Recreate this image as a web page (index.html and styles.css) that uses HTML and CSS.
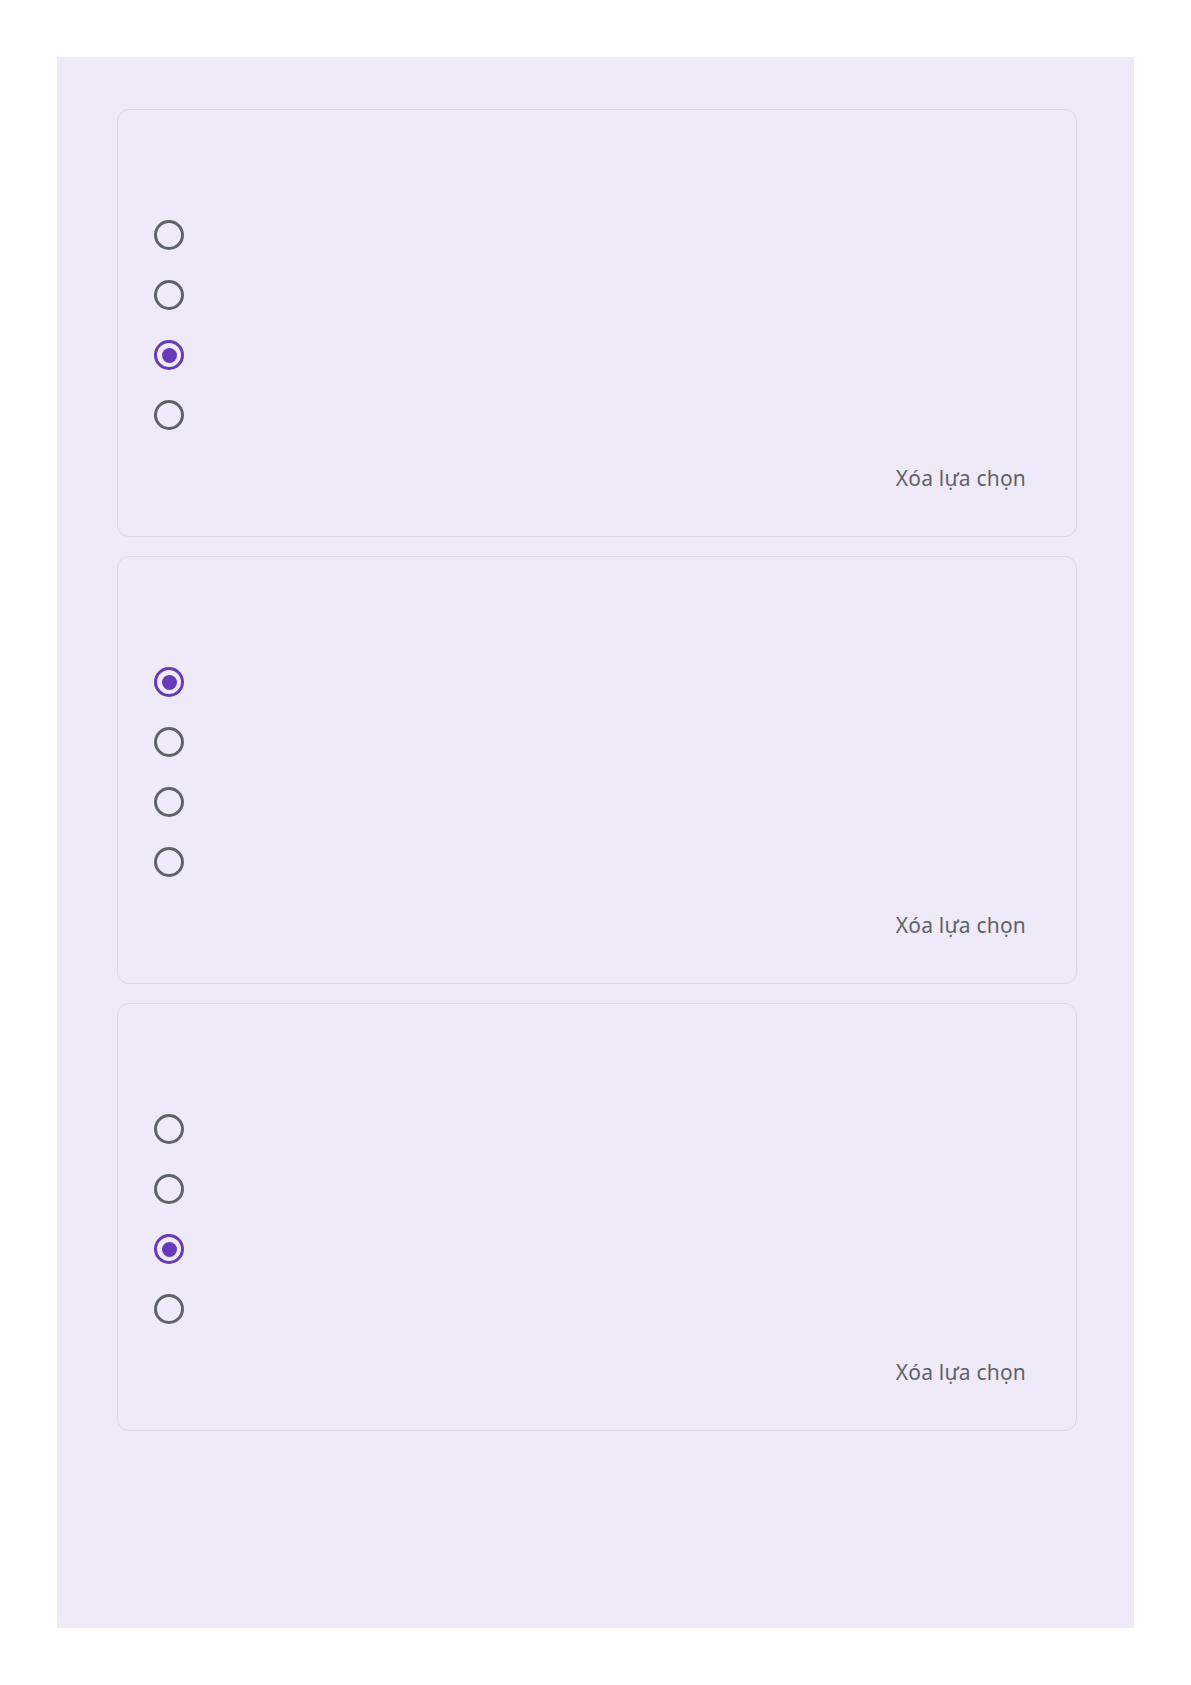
FILE: index.html
```html
<!DOCTYPE html>
<html lang="vi">
<head>
<meta charset="utf-8">
<title>Form</title>
<link rel="stylesheet" href="styles.css">
</head>
<body>
<div class="panel">
  <div class="card">
    <div class="title"></div>
    <div class="options">
      <div class="option"><span class="radio"></span></div>
      <div class="option"><span class="radio"></span></div>
      <div class="option"><span class="radio checked"></span></div>
      <div class="option"><span class="radio"></span></div>
    </div>
    <div class="footer"><span class="clear">Xóa lựa chọn</span></div>
  </div>
  <div class="card">
    <div class="title"></div>
    <div class="options">
      <div class="option"><span class="radio checked"></span></div>
      <div class="option"><span class="radio"></span></div>
      <div class="option"><span class="radio"></span></div>
      <div class="option"><span class="radio"></span></div>
    </div>
    <div class="footer"><span class="clear">Xóa lựa chọn</span></div>
  </div>
  <div class="card">
    <div class="title"></div>
    <div class="options">
      <div class="option"><span class="radio"></span></div>
      <div class="option"><span class="radio"></span></div>
      <div class="option"><span class="radio checked"></span></div>
      <div class="option"><span class="radio"></span></div>
    </div>
    <div class="footer"><span class="clear">Xóa lựa chọn</span></div>
  </div>
</div>
</body>
</html>
```
FILE: styles.css
```css
html, body {
  margin: 0;
  padding: 0;
  background: #ffffff;
}
body {
  font-family: "Noto Sans", "Open Sans", sans-serif;
}
.panel {
  margin: 57px 57px 0 57px;
  width: 1077px;
  height: 1571px;
  box-sizing: border-box;
  background: #eeeaf8;
  padding: 52px 57px 0 60px;
  display: flex;
  flex-direction: column;
  gap: 19px;
}
.card {
  width: 960px;
  height: 428px;
  box-sizing: border-box;
  border: 1px solid #dcdae0;
  border-radius: 12px;
  padding: 36px 36px 0 36px;
  display: flex;
  flex-direction: column;
}
.title {
  height: 59px;
}
.options {
  display: flex;
  flex-direction: column;
}
.option {
  height: 60px;
  display: flex;
  align-items: center;
}
.radio {
  width: 30px;
  height: 30px;
  box-sizing: border-box;
  border: 3px solid #5f6368;
  border-radius: 50%;
  display: flex;
  align-items: center;
  justify-content: center;
}
.radio.checked {
  border-color: #673ab7;
}
.radio.checked::after {
  content: "";
  width: 15px;
  height: 15px;
  border-radius: 50%;
  background: #673ab7;
}
.footer {
  padding-top: 18px;
  display: flex;
  justify-content: flex-end;
}
.clear {
  font-size: 21px;
  line-height: 30px;
  color: #5f6368;
  padding: 0 14px 0 12px;
  letter-spacing: 0.2px;
}
```
